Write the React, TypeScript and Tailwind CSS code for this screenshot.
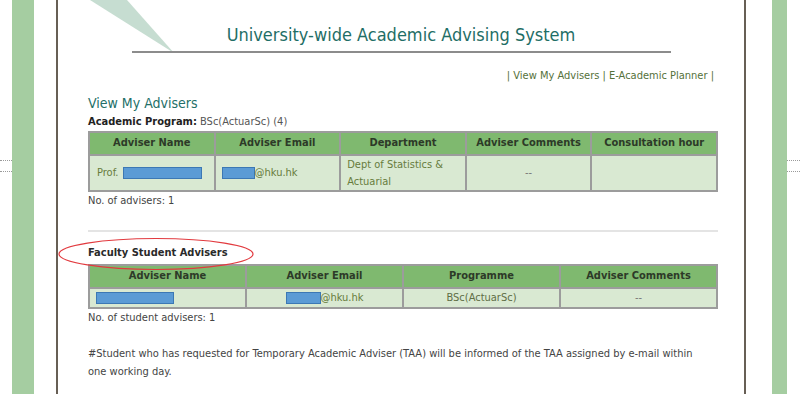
import React from 'react';

const font = { fontFamily: '"DejaVu Sans Condensed", "DejaVu Sans", sans-serif' };

const Redacted: React.FC<{ w: string }> = ({ w }) => (
  <span className={`inline-block h-[12px] align-middle bg-[#5b9bd5] border border-[#3c78b4] ${w}`} />
);

const EdgeDots: React.FC = () => (
  <div className="pt-[160px]">
    <div className="h-[12px] border-y border-dotted border-[#9a9a9a]" />
  </div>
);

const App: React.FC = () => {
  return (
    <div className="w-[800px] h-[394px] overflow-hidden bg-white flex text-[11px] text-[#444]" style={font}>
      <div className="w-[12px] shrink-0"><EdgeDots /></div>
      <div className="w-[22px] shrink-0 bg-[#a5cda1]" />
      <div className="w-[22px] shrink-0" />

      {/* main page */}
      <div className="relative w-[690px] shrink-0 border-x-2 border-[#675f55] pl-[30px] pr-[26px]">
        <svg className="absolute left-[32px] top-0" width="90" height="54" viewBox="0 0 90 54">
          <polygon points="0,0 37,0 84,53" fill="#c6ddd1" />
        </svg>

        {/* header */}
        <div className="relative -ml-[30px] -mr-[26px] pt-[22px]">
          <h1 className="text-center text-[18px] leading-[25px] text-[#1f6e66]">
            University-wide Academic Advising System
          </h1>
          <div className="mx-auto mt-[4px] w-[539px] h-[2px] bg-[#8c8c8c]" />
        </div>

        <div className="mt-[16px] pr-[4px] text-right text-[#55713a] leading-[14px]">
          | View My Advisers | E-Academic Planner |
        </div>

        <h2 className="mt-[11px] text-[14px] leading-[18px] text-[#236f68]">View My Advisers</h2>
        <p className="mt-[3px] leading-[14px]">
          <span className="font-bold text-[#222]">Academic Program:</span>{' '}
          <span className="text-[#555]">BSc(ActuarSc) (4)</span>
        </p>

        <table className="mt-[2px] w-[630px] border-collapse border-2 border-[#9c9c9c] table-fixed">
          <thead>
            <tr className="bg-[#7fb96f] h-[23px]">
              {['Adviser Name', 'Adviser Email', 'Department', 'Adviser Comments', 'Consultation hour'].map((h) => (
                <th key={h} className="border-2 border-[#9c9c9c] p-0 font-bold text-[#2d3a28] text-center">{h}</th>
              ))}
            </tr>
          </thead>
          <tbody>
            <tr className="bg-[#d9e9d2] h-[35px] text-[#677c3c]">
              <td className="border-2 border-[#9c9c9c] p-0 pl-[7px]">
                Prof. <Redacted w="w-[79px] ml-[1px]" />
              </td>
              <td className="border-2 border-[#9c9c9c] p-0 pl-[6px]">
                <Redacted w="w-[33px]" />@hku.hk
              </td>
              <td className="border-2 border-[#9c9c9c] p-0 pl-[6px] leading-[17px]">
                Dept of Statistics &amp; Actuarial
              </td>
              <td className="border-2 border-[#9c9c9c] p-0 text-center text-[#777]">--</td>
              <td className="border-2 border-[#9c9c9c] p-0" />
            </tr>
          </tbody>
        </table>
        <p className="mt-[2px] leading-[14px]">No. of advisers: 1</p>

        <div className="mt-[22px] w-[630px] h-[2px] bg-[#e4e4e4]" />

        <div className="relative mt-[14px]">
          <svg className="absolute -left-[31px] -top-[9px]" width="198" height="34" viewBox="0 0 198 34">
            <ellipse cx="99" cy="17" rx="97" ry="15.5" fill="none" stroke="#e23a3f" strokeWidth="1.2" />
          </svg>
          <p className="relative font-bold text-[#2a2a2a] leading-[14px]">Faculty Student Advisers</p>
        </div>

        <table className="mt-[4px] w-[630px] border-collapse border-2 border-[#9c9c9c] table-fixed">
          <thead>
            <tr className="bg-[#7fb96f] h-[23px]">
              {['Adviser Name', 'Adviser Email', 'Programme', 'Adviser Comments'].map((h) => (
                <th key={h} className="border-2 border-[#9c9c9c] p-0 font-bold text-[#2d3a28] text-center">{h}</th>
              ))}
            </tr>
          </thead>
          <tbody>
            <tr className="bg-[#d9e9d2] h-[20px] text-[#677c3c]">
              <td className="border-2 border-[#9c9c9c] p-0 pl-[6px]">
                <Redacted w="w-[78px]" />
              </td>
              <td className="border-2 border-[#9c9c9c] p-0 text-center">
                <Redacted w="w-[35px]" />@hku.hk
              </td>
              <td className="border-2 border-[#9c9c9c] p-0 text-center text-[#5f6e45]">BSc(ActuarSc)</td>
              <td className="border-2 border-[#9c9c9c] p-0 text-center text-[#777]">--</td>
            </tr>
          </tbody>
        </table>
        <p className="mt-[2px] leading-[14px]">No. of student advisers: 1</p>

        <p className="mt-[20px] leading-[18px] w-[610px]">
          #Student who has requested for Temporary Academic Adviser (TAA) will be informed of the TAA assigned by e-mail within one working day.
        </p>
      </div>

      <div className="w-[26px] shrink-0" />
      <div className="w-[15px] shrink-0 bg-[#a5cda1]" />
      <div className="w-[13px] shrink-0"><EdgeDots /></div>
    </div>
  );
};

export default App;
